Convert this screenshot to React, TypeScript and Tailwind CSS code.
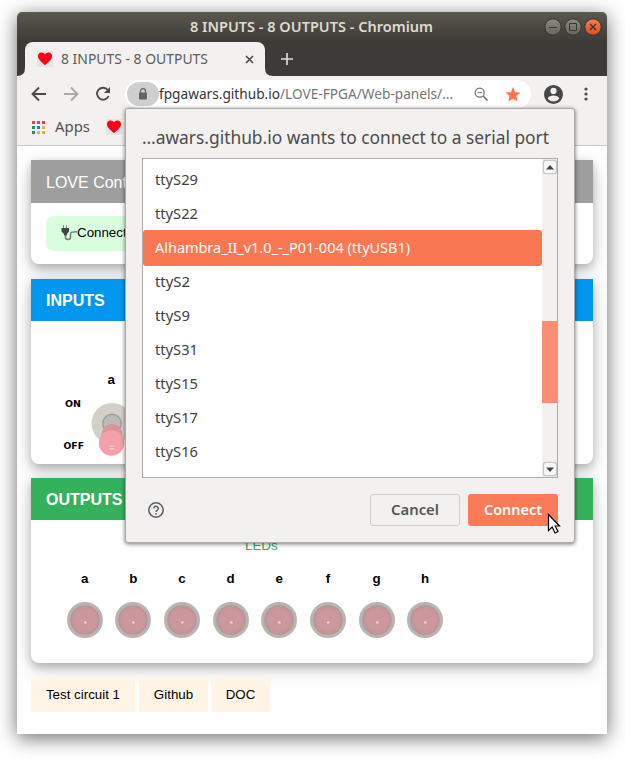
import React from "react";

const ui = "font-['Noto_Sans','Open_Sans',sans-serif]";
const arial = "font-['Liberation_Sans',Arial,sans-serif]";

function Heart() {
  return (
    <svg className="block size-4 shrink-0 bg-[#e5e5e7]" viewBox="0 0 16 16">
      <path d="M8 14.2C6.200 12.200 1 9.100 1 5.200 1 2.900 2.600 1.600 4.600 1.600c1.500 0 2.700.8 3.400 1.800.7-1 1.900-1.800 3.400-1.800C13.400 1.600 15 2.900 15 5.200c0 3.900-5.200 7-7 9z" fill="#ff0019" />
    </svg>
  );
}

/* Label with a fixed drawn width, so that it keeps its size whatever family is found. */
function Label({ text, width, size, weight = 400, color }: { text: React.ReactNode; width: number; size: number; weight?: number; color: string }) {
  return (
    <svg className="block shrink-0 overflow-visible" width={width} height={20}>
      <text x="0" y="15" textLength={width} lengthAdjust="spacingAndGlyphs" className={ui} fontSize={size} fontWeight={weight} fill={color}>
        {text}
      </text>
    </svg>
  );
}

function WindowButtons() {
  return (
    <svg className="absolute right-[5px] top-[6px]" width="58" height="18" viewBox="0 0 58 18">
      <defs>
        <linearGradient id="grey" x2="0" y2="1"><stop stopColor="#8b8980" /><stop offset="1" stopColor="#66645d" /></linearGradient>
        <linearGradient id="orange" x2="0" y2="1"><stop stopColor="#f37e55" /><stop offset="1" stopColor="#df4c1c" /></linearGradient>
      </defs>
      <g stroke="#37352f">
        <circle cx="9" cy="9" r="8.2" fill="url(#grey)" />
        <circle cx="29" cy="9" r="8.2" fill="url(#grey)" />
        <circle cx="49" cy="9" r="8.2" fill="url(#orange)" />
        <path d="M5 9.500h8" />
        <path d="M25.500 5.500h7v7h-7z" fill="none" />
        <path d="M46 6l6 6m0-6l-6 6" strokeWidth="1.300" />
      </g>
    </svg>
  );
}

function TabStrip() {
  return (
    <div className="flex h-[34px] bg-[#3d3b37] pl-2">
      <div className="relative flex h-[34px] w-60 items-center rounded-t-lg bg-[#f2f1f0] pl-3 pr-[11px]">
        <Heart />
        <div className="ml-2 flex-1">
          <Label text="8 INPUTS - 8 OUTPUTS" width={147} size={14} color="#5b5b5b" />
        </div>
        <svg width="9" height="9" viewBox="0 0 9 9"><path d="M1 1l7 7m0-7L1 8" stroke="#4d4d4d" strokeWidth="1.700" /></svg>
        <svg className="absolute -left-2 bottom-0" width="8" height="8"><path d="M8 0v8H0Q8 8 8 0" fill="#f2f1f0" /></svg>
        <svg className="absolute -right-2 bottom-0" width="8" height="8"><path d="M0 0v8h8Q0 8 0 0" fill="#f2f1f0" /></svg>
      </div>
      <svg className="ml-4 mt-[11px]" width="12" height="12"><path d="M6 0v12M0 6h12" stroke="#e5e1da" strokeWidth="1.600" /></svg>
    </div>
  );
}

function Toolbar() {
  return (
    <div className="flex h-[36px] items-center pl-[14px] pr-[13px]">
      <svg width="80" height="16" viewBox="0 0 80 16" fill="none" strokeWidth="1.900" className="shrink-0">
        <path d="M15 8H2M8 1.500L1.500 8 8 14.500" stroke="#4a4a4a" />
        <path d="M33 8h13M40 1.500L46.500 8 40 14.500" stroke="#a9a8a7" />
        <path d="M76.800 4A6 6 0 1 0 77.600 10" stroke="#4a4a4a" />
        <path d="M79 1v6h-6z" fill="#4a4a4a" stroke="none" />
      </svg>
      <div className="ml-[14px] flex h-7 w-[406px] items-center rounded-full bg-white pl-[2px] pr-2.5">
        <div className="flex h-6 w-8 shrink-0 items-center justify-center rounded-full bg-[#cfcfcf]">
          <svg width="10" height="13" viewBox="0 0 10 13"><rect x="1" y="4.500" width="8" height="7" rx="1" fill="#656565" /><path d="M2.500 5V3.200a2.500 2.500 0 0 1 5 0V5" fill="none" stroke="#656565" strokeWidth="1.200" /></svg>
        </div>
        <Label text={<>fpgawars.github.io<tspan fill="#757575">/LOVE-FPGA/Web-panels/…</tspan></>} width={294} size={15} color="#343434" />
        <svg className="ml-[21px] shrink-0" width="15" height="15" viewBox="0 0 15 15" fill="none" stroke="#737373"><circle cx="5.700" cy="5.700" r="4.500" strokeWidth="1.300" /><path d="M3.500 5.700H8" /><path d="M9 9l4.500 4.500" strokeWidth="1.600" /></svg>
        <svg className="ml-4 shrink-0" width="16" height="15" viewBox="0 0 16 15"><path d="M8 0l2.100 5.200 5.500.4-4.200 3.500 1.300 5.500L8 11.700l-4.700 2.900 1.300-5.500L.4 5.600l5.500-.4z" fill="#fb7550" /></svg>
      </div>
      <svg className="ml-[12.500px] shrink-0" width="19" height="19" viewBox="0 0 20 20"><path fillRule="evenodd" d="M10 0a10 10 0 1 0 0 20 10 10 0 0 0 0-20zm0 3a3.200 3.200 0 1 1 0 6.500A3.200 3.200 0 0 1 10 3zm0 14.300c-2.500 0-4.700-1.300-6-3.200 0-2 4-3.100 6-3.100s6 1.100 6 3.100c-1.300 1.900-3.500 3.200-6 3.200z" fill="#474747" /></svg>
      <svg className="ml-auto mr-[6.500px] shrink-0" width="4" height="14" fill="#4a4a4a"><circle cx="2" cy="2" r="1.600" /><circle cx="2" cy="7" r="1.600" /><circle cx="2" cy="12" r="1.600" /></svg>
    </div>
  );
}

function Bookmarks() {
  const colors = ["#f23c4f", "#f23c4f", "#f23c4f", "#139b5d", "#1183e8", "#f7aa36", "#139b5d", "#f7aa36", "#f7aa36"];
  return (
    <div className="flex h-[33px] items-center pl-[15px] pb-[3px]">
      <div className="grid grid-cols-3 gap-[2px]">
        {colors.map((c, i) => <i key={i} className="size-[3px]" style={{ backgroundColor: c }} />)}
      </div>
      <div className="ml-[10px] mr-4"><Label text="Apps" width={35} size={15} color="#525252" /></div>
      <Heart />
    </div>
  );
}

function Card({ title, head, height, children }: { title: string; head: string; height: string; children?: React.ReactNode }) {
  return (
    <section className={`${height} w-[562px] rounded-b-lg bg-white shadow-[0_4px_8px_rgba(0,0,0,.2),0_6px_20px_rgba(0,0,0,.19)]`}>
      <h2 className={`${head} flex items-center pl-[15px] pt-[2px] text-base text-white`}>{title}</h2>
      {children}
    </section>
  );
}

function Switch() {
  return (
    <div className="ml-[30px] mt-[51px] w-[85px]">
      <div className="pl-[46.500px] text-[13.33px] font-bold leading-4">a</div>
      <svg className="block" width="85" height="72" viewBox="0 0 85 72">
        <g className="font-['DejaVu_Sans',sans-serif]" fontSize="9.500" fontWeight="700">
          <text x="4" y="18.500" textLength="16" lengthAdjust="spacingAndGlyphs">ON</text>
          <text x="2.500" y="60.500" textLength="20.500" lengthAdjust="spacingAndGlyphs">OFF</text>
        </g>
        <circle cx="51" cy="35.500" r="20.500" fill="#d3cfc9" />
        <circle cx="51" cy="35.500" r="9.200" fill="#bdbbb7" stroke="#9d9d9c" strokeWidth="1.500" />
        <path d="M41.500 42.500c2-8.500 17-8.500 19 0l2.500 12h-24z" fill="#df929b" />
        <circle cx="50.500" cy="55" r="12.700" fill="#f2a1aa" />
        <path d="M49 57.500h1.500v1.500h-1.500zM51.500 57.500h1.500v1.500h-1.500zM49 60h1.500v1.500h-1.500zM51.500 60h1.500v1.500h-1.500z" fill="#f9cdd0" />
      </svg>
    </div>
  );
}

function Leds() {
  return (
    <>
      <div className="mt-[17px] pl-[214px] text-[13.33px] leading-[18px] text-[#35b05b]">LEDs</div>
      <div className="ml-[29.500px] mt-4 grid w-[389px] grid-cols-8">
        {"abcdefgh".split("").map((n) => (
          <div key={n} className="flex flex-col items-center">
            <b className="text-[13.33px] leading-4">{n}</b>
            <svg className="mt-[14px]" width="38" height="38" viewBox="0 0 38 38">
              <circle cx="19" cy="19" r="18" fill="#b8b4b3" />
              <circle cx="19" cy="19" r="14" fill="#c9959a" stroke="#b99496" strokeWidth="1.500" />
              <circle cx="19" cy="19" r="11" fill="#cc989e" />
              <rect x="18" y="20.500" width="2.500" height="2" rx=".5" fill="#eed7db" />
            </svg>
          </div>
        ))}
      </div>
    </>
  );
}

function ScrollArrow({ down = false }: { down?: boolean }) {
  return (
    <div className="flex size-[14px] items-center justify-center rounded-[3px] border border-[#c8c8c8] bg-[#f8f8f8] shadow-[0_0_1px_#999]">
      <svg width="8" height="5" className={down ? "rotate-180" : ""}><path d="M4 0l4 4.500H0z" fill="#444" /></svg>
    </div>
  );
}

const ports: [string, number][] = [["ttyS29", 43], ["ttyS22", 43], ["Alhambra_II_v1.0_-_P01-004 (ttyUSB1)", 255], ["ttyS2", 35], ["ttyS9", 35], ["ttyS31", 43], ["ttyS15", 43], ["ttyS17", 43], ["ttyS16", 43]];

function PortDialog() {
  return (
    <div className="absolute left-[125px] top-[108px] h-[435px] w-[450px] rounded-[3px] border border-[#aaa9a7] bg-[#f2f1f0] px-4 pt-5 shadow-[0_1px_4px_rgba(0,0,0,.55)]">
      <div className="h-[29px]"><Label text="…awars.github.io wants to connect to a serial port" width={407} size={18} color="#4b4b4b" /></div>
      <div className="flex h-[320px] w-[416px] border border-[#aeadac] bg-white">
        <div className="flex-1 pt-1">
          {ports.map(([name, width], i) => (
            <div key={name} className={i === 2 ? "-my-px flex h-9 items-center rounded-[3px] bg-[#f97751] pl-3" : "flex h-[34px] items-center pl-3"}>
              <Label text={name} width={width} size={14.5} color={i === 2 ? "#fff" : "#404040"} />
            </div>
          ))}
        </div>
        <div className="flex w-[15px] flex-col items-center bg-[#f2f1f0] py-px">
          <ScrollArrow />
          <div className="mt-[147px] h-[82px] w-full bg-[#fa8e73]" />
          <div className="mt-auto"><ScrollArrow down /></div>
        </div>
      </div>
      <div className="mt-4 flex h-8 items-center">
        <svg className="ml-[6px]" width="16" height="16" viewBox="0 0 16 16" fill="none" stroke="#5b5d61" strokeWidth="1.500"><circle cx="8" cy="8" r="7.200" /><path d="M5.800 6.400a2.200 2.200 0 1 1 3.300 1.900C8.300 8.800 8 9 8 10M8 11.200v1.500" /></svg>
        <div className="ml-auto flex h-8 w-[90px] items-center justify-center rounded-[3px] border border-[#cecdcb]"><Label text="Cancel" width={48} size={14.5} weight={600} color="#555" /></div>
        <div className="ml-2 flex h-8 w-[90px] items-center justify-center rounded-[3px] bg-[#fa7b58]"><Label text="Connect" width={58} size={14.5} weight={600} color="#fff" /></div>
      </div>
    </div>
  );
}

export default function App() {
  return (
    <div className={`relative h-[759px] w-[625px] overflow-hidden bg-white pl-[17px] pt-3 ${ui}`}>
      <main className="h-[722px] w-[590px] overflow-hidden rounded-t-[5px] bg-white shadow-[0_4px_20px_rgba(0,0,0,.58)]">
        <header className="bg-[#f2f1f0]">
          <div className="relative flex h-[30px] justify-center bg-linear-to-b from-[#5b584f] to-[#3d3b37] pt-[5px] pr-px">
            <Label text="8 INPUTS - 8 OUTPUTS - Chromium" width={243} size={14} weight={600} color="#dfdbd2" />
            <WindowButtons />
          </div>
          <TabStrip />
          <Toolbar />
          <Bookmarks />
        </header>
        <div className={`flex h-[589px] flex-col border-t border-[#c8c7c6] pl-[14px] pt-[14px] text-black ${arial}`}>
          <Card title="LOVE Control" height="h-[104px]" head="h-[43px] bg-[#9e9e9e]">
            <div className="ml-[15px] mt-[13px] flex h-[35px] w-[150px] items-center rounded-lg bg-[#daffdf] pb-px pl-[15px] text-[13.33px]">
              <svg width="16" height="16" viewBox="0 0 16 16"><path d="M2.500 0v3M5.500 0v3" stroke="#888" /><path d="M.5 3h7.500v3.500L6 9v1.500H3V9L.5 6.500z" fill="#444" /><path d="M4.500 10v2.500c0 2.500 5 2.500 5 0V9c0-2 1.500-2.200 6.500-2.200" fill="none" stroke="#777b78" strokeWidth="1.500" /></svg>
              Connect
            </div>
          </Card>
          <div className="h-[15px]" />
          <Card title="INPUTS" height="h-[185px]" head="h-[42px] bg-[#0297ef] font-bold"><Switch /></Card>
          <div className="h-[14px]" />
          <Card title="OUTPUTS" height="h-[185px]" head="h-[42px] bg-[#35b05b] font-bold"><Leds /></Card>
          <nav className="relative mt-[15px] flex text-[13.33px]">
            <span className="flex h-[34px] w-[104px] items-center justify-center bg-[#fff4e6]">Test circuit 1</span>
            <span className="ml-1 flex h-[34px] w-[69px] items-center justify-center bg-[#fff4e6]">Github</span>
            <span className="ml-[3px] flex h-[34px] w-[59px] items-center justify-center bg-[#fff4e6]">DOC</span>
          </nav>
        </div>
      </main>
      <PortDialog />
      <svg className="absolute left-[547px] top-[513px]" width="15" height="22" viewBox="0 0 15 22"><path d="M1.500 1.500v16l3.700-3.500 2.800 6 3-1.500-2.800-5.500H12.500z" fill="#fff" stroke="#000" strokeWidth="1.200" /></svg>
    </div>
  );
}
